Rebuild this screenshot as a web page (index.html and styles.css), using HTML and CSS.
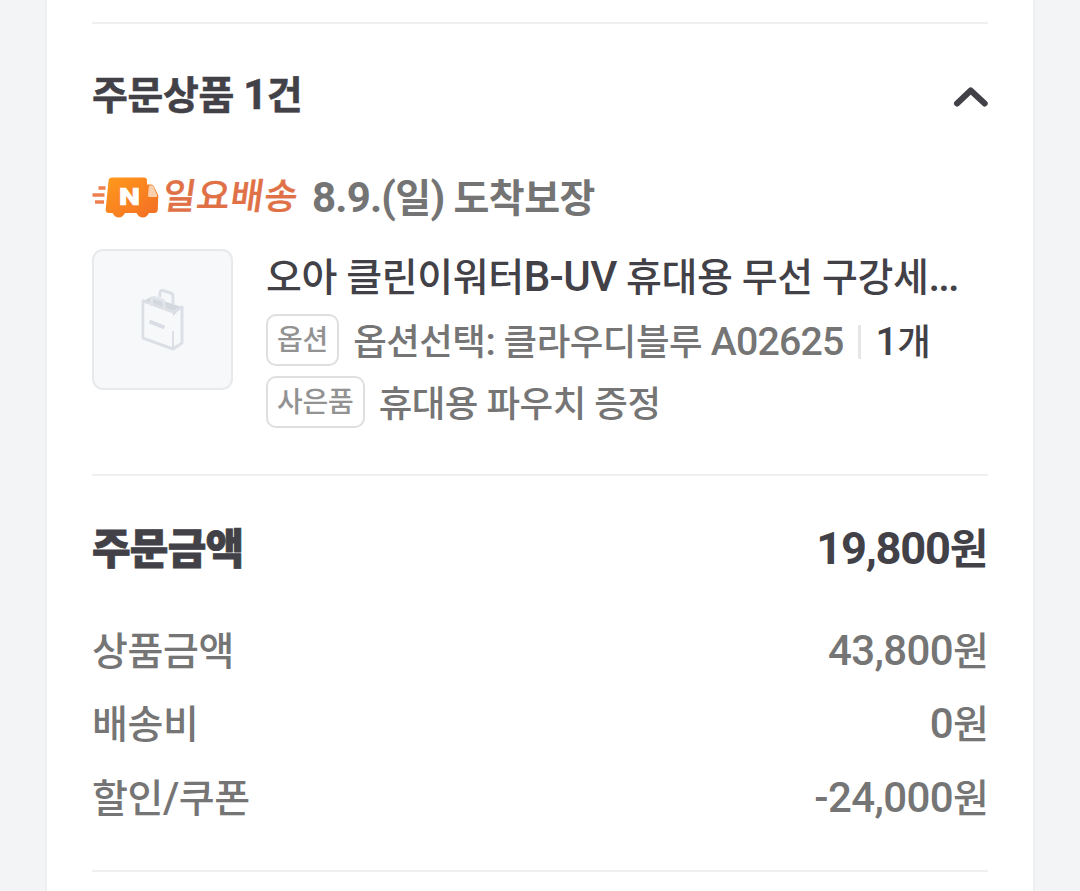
FILE: index.html
```html
<!DOCTYPE html>
<html lang="ko">
<head>
    <meta charset="UTF-8">
    <meta name="viewport" content="width=device-width, initial-scale=1.0">
    <title>주문상품</title>
    <link rel="stylesheet" href="styles.css">
</head>
<body>
    <main class="card">
        <section class="products">
            <header class="section-head">
                <h2 class="title">주문상품 <span class="num">1</span>건</h2>
                <svg class="chevron" width="36" height="22" viewBox="0 0 36 22">
                    <path d="M5 17.500 18.700 4.500l14 13" fill="none" stroke="#424148" stroke-width="6" stroke-linecap="round" stroke-linejoin="round"/>
                </svg>
            </header>
            <div class="delivery">
                <svg class="truck" width="68" height="42" viewBox="0 0 68 42">
                    <defs>
                        <linearGradient id="orange" x1="0" y1="0" x2="1" y2="1">
                            <stop offset="0" stop-color="#ff9a1c"/>
                            <stop offset="1" stop-color="#f36d25"/>
                        </linearGradient>
                    </defs>
                    <path d="M6.500 12h7M.5 19h12M3 26h9" fill="none" stroke="#ee8050" stroke-width="3.600"/>
                    <path d="M20 1.500h32q3 0 3 3V8.500h4q2 0 3 2l4.300 9-.5 14q-.3 3.500-3.500 3.500H57q-2.500 4.500-6.200 4.500T44.500 37H33q-2.500 4.500-6.200 4.500T20.500 37H17q-3.500 0-3.300-3.500L16.500 5q.3-3.500 3.500-3.500z" fill="url(#orange)"/>
                    <path d="M58 9.500h2q1 0 1.500 1l3.500 8.500q.7 2-1 2h-6.500q-1.700 0-1.500-1.500l.8-8.500q0-1.500 1.200-1.500z" fill="#fbd0ae"/>
                    <text class="truck-n" x="27" y="28.500" textLength="21" lengthAdjust="spacingAndGlyphs">N</text>
                </svg>
                <span class="delivery-name">일요배송</span>
                <strong class="arrival"><span class="num">8.9.(</span>일<span class="num">)</span> 도착보장</strong>
            </div>
            <div class="product">
                <div class="thumb">
                    <svg width="46" height="64" viewBox="0 0 46 64">
                        <path d="M3 13l8-4 31 10-9 9z" fill="#d3d8df"/>
                        <path d="M3 13v37l30 11 9-6V19l-9 5L3 13z" fill="none" stroke="#dce0e6" stroke-width="3" stroke-linejoin="round"/>
                        <path d="M4.500 15 33 25.500V59L4.500 49z" fill="#f6f8fa"/>
                        <path d="M33 43v17" stroke="#dce0e6" stroke-width="2"/>
                        <path d="M20 9V5q0-3 3-2.500l7.500 2.500q2.500 1 2.500 3V16" fill="none" stroke="#dce0e6" stroke-width="3"/>
                        <path d="M11.500 18v-6q0-3 2.500-2.500l8 2.500q2 .7 2 2.500V22" fill="none" stroke="#e1e5ea" stroke-width="3"/>
                        <path d="M9.500 33.500l15 6" stroke="#dadee4" stroke-width="4"/>
                    </svg>
                </div>
                <div class="info">
                    <p class="name">오아 클린이워터<span class="num">B-UV</span> 휴대용 무선 구강세<span class="num dots">...</span></p>
                    <p class="line">
                        <span class="badge">옵션</span>
                        <span class="value">옵션선택<span class="num">:</span> 클라우디블루 <span class="num">A02625</span></span>
                        <span class="count"><span class="num">1</span>개</span>
                    </p>
                    <p class="line">
                        <span class="badge">사은품</span>
                        <span class="value">휴대용 파우치 증정</span>
                    </p>
                </div>
            </div>
        </section>
        <section class="amount">
            <div class="total">
                <h2>주문금액</h2>
                <strong><span class="num">19,800</span>원</strong>
            </div>
            <dl class="prices">
                <div class="row"><dt>상품금액</dt><dd><span class="num">43,800</span>원</dd></div>
                <div class="row"><dt>배송비</dt><dd><span class="num">0</span>원</dd></div>
                <div class="row"><dt>할인<span class="num">/</span>쿠폰</dt><dd><span class="num">-24,000</span>원</dd></div>
            </dl>
        </section>
    </main>
</body>
</html>
```
FILE: styles.css
```css
* {
    box-sizing: border-box;
}
body {
    margin: 0;
    background: #f3f4f6;
    color: #424148;
    font-family: Roboto, "Noto Sans CJK KR", sans-serif;
    overflow: hidden;
}
h2, p, dl, dd {
    margin: 0;
}
.card {
    width: 990px;
    height: 891px;
    margin: 0 auto;
    padding: 22px 45px 0;
    background: #fff;
    border: solid #eeeff1;
    border-width: 0 2px;
    white-space: nowrap;
}
/* latin and digits run a little larger than hangul */
.num {
    font-size: 1.077em;
    line-height: 0;
    letter-spacing: -0.600px;
}
.products, .amount {
    border-top: 2px solid #efeff1;
}
.products {
    height: 452px;
    padding-top: 41px;
}
.section-head {
    display: flex;
    justify-content: space-between;
    align-items: center;
    height: 60px;
}
.title {
    padding-top: 2px;
    font-size: 39px;
    font-weight: 700;
    line-height: 60px;
    letter-spacing: -0.400px;
    -webkit-text-stroke: 0.500px #424148;
}
.chevron {
    margin-top: 3px;
}
.delivery {
    display: flex;
    align-items: center;
    height: 60px;
    margin-top: 42px;
}
.truck {
    flex: none;
}
.truck-n {
    fill: #fff;
    stroke: #fff;
    stroke-width: 0.600px;
    font-size: 24px;
    font-weight: 900;
}
.delivery-name {
    width: 136px;
    margin-left: 3px;
    color: #e07045;
    font-size: 36px;
    font-weight: 500;
    line-height: 60px;
    letter-spacing: 0.700px;
    transform: skewX(-8deg);
    -webkit-text-stroke: 0.400px #e07045;
}
.arrival {
    margin-left: 13px;
    padding-top: 3px;
    color: #747474;
    font-size: 39px;
    font-weight: 700;
    line-height: 60px;
    letter-spacing: -0.600px;
}
.arrival .num {
    letter-spacing: -0.800px;
}
.product {
    display: flex;
    margin-top: 22px;
}
.thumb {
    display: flex;
    justify-content: center;
    align-items: center;
    width: 141px;
    height: 141px;
    background: #f6f8fa;
    border: 2px solid #e8e9eb;
    border-radius: 11px;
}
.info {
    margin-left: 33px;
}
.name {
    height: 56px;
    line-height: 58px;
    font-size: 39px;
    font-weight: 500;
    letter-spacing: -0.400px;
}
.dots {
    letter-spacing: -1.800px;
}
.line {
    display: flex;
    align-items: center;
    height: 52px;
    margin-top: 9px;
    font-size: 36.500px;
    font-weight: 500;
}
.line + .line {
    margin-top: 10px;
}
.badge {
    height: 52px;
    padding: 0 9px;
    border: 2px solid #dfdfdf;
    border-radius: 10px;
    color: #929292;
    font-size: 28px;
    font-weight: 500;
    line-height: 50px;
    letter-spacing: -0.200px;
}
.value, .count {
    padding-top: 5px;
    line-height: 47px;
}
.value {
    margin-left: 14px;
    color: #757575;
    letter-spacing: -0.500px;
}
.value .num {
    letter-spacing: -0.800px;
}
.count {
    position: relative;
    margin-left: 32px;
    letter-spacing: -0.500px;
}
.count::before {
    content: "";
    position: absolute;
    left: -18px;
    top: 11px;
    width: 3px;
    height: 34px;
    background: #e6e6e8;
}
.total, .row {
    display: flex;
    justify-content: space-between;
    align-items: center;
}
.amount {
    height: 398px;
    padding-top: 44px;
    border-bottom: 2px solid #efeff1;
}
.total {
    height: 60px;
    font-size: 42px;
    line-height: 60px;
}
.total h2 {
    font-size: 42px;
    font-weight: 900;
    letter-spacing: -0.800px;
    -webkit-text-stroke: 0.800px #424148;
}
.total strong {
    font-weight: 700;
    letter-spacing: -0.500px;
}
.total .num {
    letter-spacing: -1.200px;
}
.prices {
    margin-top: 35px;
}
.row {
    height: 73.500px;
    color: #757575;
    font-size: 39px;
    font-weight: 500;
    line-height: 60px;
    letter-spacing: -0.400px;
}
.row dd {
    margin-right: -1px;
    letter-spacing: 0;
}
```
